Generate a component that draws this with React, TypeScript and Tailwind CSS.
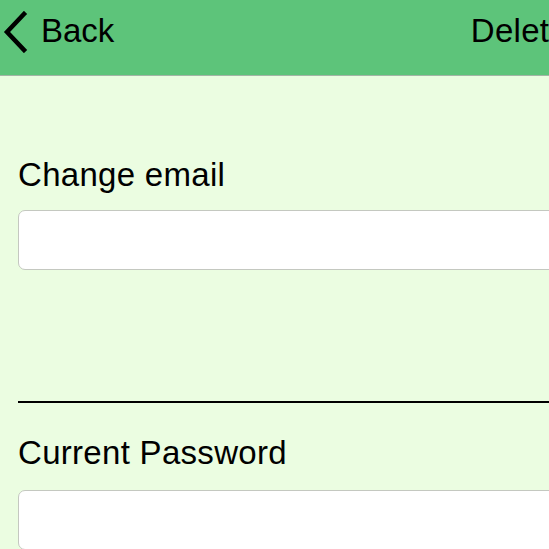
import { useState } from 'react';

function BackChevron() {
  return (
    <svg width="26" height="42" viewBox="0 0 26 42" className="shrink-0">
      <path d="M22 3 L5 21 L22 39" fill="none" stroke="black" strokeWidth="4.5" strokeLinecap="square" />
    </svg>
  );
}

export default function App() {
  const [email, setEmail] = useState('');
  const [password, setPassword] = useState('');

  return (
    <div className="w-full min-h-[549px] overflow-hidden bg-[#ebfde1] font-['Liberation_Sans',Arial,sans-serif] text-black">
      <div className="w-[580px]">
        {/* header */}
        <div className="h-[76px] bg-[#5dc47a] border-b border-[#a3b5a6] flex items-start justify-between pr-[12px]">
          <button className="flex items-start pl-[2px] pt-[11px] gap-[13px]">
            <BackChevron />
            <span className="text-[33px] leading-[38px] mt-[1px]">Back</span>
          </button>
          <button className="text-[33px] leading-[38px] pt-[12px] tracking-[0.3px]">Delete</button>
        </div>

        <div className="px-[18px]">
          {/* email */}
          <div className="pt-[80px]">
            <label className="block text-[33px] leading-[38px] tracking-[0.3px]">Change email</label>
            <input
              type="email"
              value={email}
              onChange={(e) => setEmail(e.target.value)}
              className="mt-[16px] block w-full h-[60px] bg-white border border-[#c4c8c0] rounded-[7px] px-3 text-[28px] outline-none"
            />
          </div>

          <div className="mt-[131px] h-[2px] bg-black" />

          {/* password */}
          <div className="pt-[31px]">
            <label className="block text-[33px] leading-[38px] tracking-[0.3px]">Current Password</label>
            <input
              type="password"
              value={password}
              onChange={(e) => setPassword(e.target.value)}
              className="mt-[18px] block w-full h-[60px] bg-white border border-[#c4c8c0] rounded-[7px] px-3 text-[28px] outline-none"
            />
          </div>
        </div>
      </div>
    </div>
  );
}
